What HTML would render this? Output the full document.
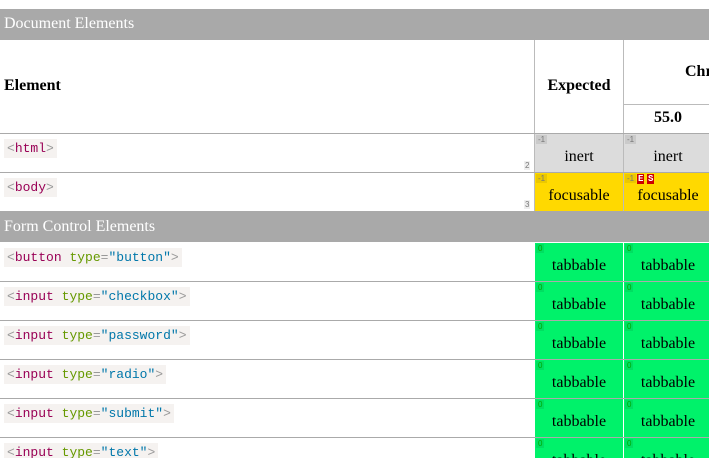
<!DOCTYPE html>
<html style="overflow:hidden"><head><style>
html,body{overflow:hidden}
body{margin:0;width:709px;height:458px;background:#fff;font-family:"Liberation Serif",serif;position:relative}
div{position:absolute;box-sizing:border-box}
.bar{left:0;width:709px;background:#a9a9a9;color:#fff;font-size:16px;padding-left:4px}
.hl{left:0;width:709px;height:1px;background:#aaa}
.vl{width:1px;background:#bbb}
.th{font-weight:bold;font-size:16px;text-align:center}
.code{left:4px;font:13px "Liberation Mono",monospace;background:#f5f2f0;padding:2px 3px;color:#999;white-space:pre}
.t{color:#905}.a{color:#690}.v{color:#07a}
.cell{width:88px;height:38px;text-align:center;font-size:16px;padding-top:14px;color:#000}
.g{background:#00f26a}.y{background:#ffd900}.gr{background:#dcdcdc}
.idx{left:1px;top:1px;font-size:8px;padding:0 2px;color:#777;background:rgba(0,0,0,.08);font-family:"Liberation Sans",sans-serif}
.g .idx{color:#0a0}
.num{font-size:8px;color:#777;background:#eee;padding:0 1px;font-family:"Liberation Sans",sans-serif}
.b{background:#c00;color:#fff;font:bold 9px "Liberation Mono",monospace;padding:0 1px;top:1px}
</style></head><body>
<div class="bar" style="top:9px;height:31px;line-height:30px">Document Elements</div>
<div class="th" style="left:4px;top:77px;text-align:left">Element</div>
<div class="th" style="left:535px;top:77px;width:88px">Expected</div>
<div class="th" style="left:685px;top:63px">Chrome</div>
<div class="th" style="left:624px;top:109px;width:88px">55.0</div>
<div style="left:624px;top:104px;width:85px;height:1px;background:#bbb"></div>
<div class="vl" style="left:534px;top:40px;height:171px"></div>
<div class="vl" style="left:623px;top:40px;height:171px"></div>
<div class="hl" style="top:133px"></div>
<div class="hl" style="top:172px"></div>

<div class="code" style="top:139px">&lt;<span class="t">html</span>&gt;</div>
<div class="num" style="left:524px;top:161px">2</div>
<div class="cell gr" style="left:535px;top:134px"><div class="idx">-1</div>inert</div>
<div class="cell gr" style="left:624px;top:134px"><div class="idx">-1</div>inert</div>

<div class="code" style="top:178px">&lt;<span class="t">body</span>&gt;</div>
<div class="num" style="left:524px;top:200px">3</div>
<div class="cell y" style="left:535px;top:173px"><div class="idx">-1</div>focusable</div>
<div class="cell y" style="left:624px;top:173px"><div class="idx">-1</div><div class="b" style="left:13px">E</div><div class="b" style="left:23px">S</div>focusable</div>

<div class="bar" style="top:211px;height:31px;line-height:31px">Form Control Elements</div>

<div class="hl" style="top:281px"></div><div class="hl" style="top:320px"></div><div class="hl" style="top:359px"></div><div class="hl" style="top:398px"></div><div class="hl" style="top:437px"></div>

<div class="code" style="top:248px">&lt;<span class="t">button</span> <span class="a">type</span>=<span class="v">"button"</span>&gt;</div>
<div class="code" style="top:287px">&lt;<span class="t">input</span> <span class="a">type</span>=<span class="v">"checkbox"</span>&gt;</div>
<div class="code" style="top:326px">&lt;<span class="t">input</span> <span class="a">type</span>=<span class="v">"password"</span>&gt;</div>
<div class="code" style="top:365px">&lt;<span class="t">input</span> <span class="a">type</span>=<span class="v">"radio"</span>&gt;</div>
<div class="code" style="top:404px">&lt;<span class="t">input</span> <span class="a">type</span>=<span class="v">"submit"</span>&gt;</div>
<div class="code" style="top:443px">&lt;<span class="t">input</span> <span class="a">type</span>=<span class="v">"text"</span>&gt;</div>

<div class="cell g" style="left:535px;top:243px"><div class="idx">0</div>tabbable</div>
<div class="cell g" style="left:624px;top:243px"><div class="idx">0</div>tabbable</div>
<div class="cell g" style="left:535px;top:282px"><div class="idx">0</div>tabbable</div>
<div class="cell g" style="left:624px;top:282px"><div class="idx">0</div>tabbable</div>
<div class="cell g" style="left:535px;top:321px"><div class="idx">0</div>tabbable</div>
<div class="cell g" style="left:624px;top:321px"><div class="idx">0</div>tabbable</div>
<div class="cell g" style="left:535px;top:360px"><div class="idx">0</div>tabbable</div>
<div class="cell g" style="left:624px;top:360px"><div class="idx">0</div>tabbable</div>
<div class="cell g" style="left:535px;top:399px"><div class="idx">0</div>tabbable</div>
<div class="cell g" style="left:624px;top:399px"><div class="idx">0</div>tabbable</div>
<div class="cell g" style="left:535px;top:438px;height:20px"><div class="idx">0</div>tabbable</div>
<div class="cell g" style="left:624px;top:438px;height:20px"><div class="idx">0</div>tabbable</div>
</body></html>
